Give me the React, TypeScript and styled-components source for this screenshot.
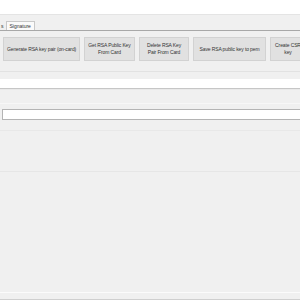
import styled, { createGlobalStyle } from 'styled-components'

const Global = createGlobalStyle`
  html, body {
    margin: 0;
    padding: 0;
    background: #f0f0f0;
    overflow: hidden;
  }
  #root {
    width: 300px;
    height: 300px;
  }
`

const Window = styled.div`
  width: 300px;
  height: 300px;
  display: flex;
  flex-direction: column;
  background: #f0f0f0;
  font-family: 'Liberation Sans', Arial, sans-serif;
  font-size: 5px;
  color: #333;
  overflow: hidden;
`

const TopArea = styled.div`
  height: 14px;
  background: #ffffff;
  border-bottom: 1px solid #e4e4e4;
`

const TabStrip = styled.div`
  height: 15px;
  display: flex;
  align-items: flex-end;
  border-bottom: 1px solid #a8a8a8;
`

const Tab = styled.div<{ $active?: boolean }>`
  height: 8px;
  padding: 0 3px;
  display: flex;
  align-items: center;
  background: ${(p) => (p.$active ? '#fafafa' : '#f0f0f0')};
  border: 1px solid ${(p) => (p.$active ? '#c8c8c8' : 'transparent')};
  border-bottom: none;
  white-space: nowrap;
`

const ClippedTab = styled(Tab)`
  padding: 0 1px 0 0;
`

const Panel = styled.div`
  flex: 1;
  display: flex;
  flex-direction: column;
`

const ButtonRow = styled.div`
  display: flex;
  gap: 4px;
  padding: 6px 0 0 3px;
  height: 24px;
`

const Action = styled.button<{ $w: number; $single?: boolean }>`
  flex: 0 0 ${(p) => p.$w}px;
  height: 24px;
  margin: 0;
  padding: 0 3px;
  background: #e1e1e1;
  border: 1px solid #d2d2d2;
  font-family: inherit;
  font-size: 5px;
  letter-spacing: -0.12px;
  line-height: 7px;
  color: #333;
  text-align: center;
  white-space: ${(p) => (p.$single ? 'nowrap' : 'normal')};
  overflow: hidden;
`

const Divider = styled.div`
  height: 1px;
  margin-top: 10px;
  background: #e2e2e2;
`

const WhiteBand = styled.div`
  height: 9px;
  margin-top: 7px;
  background: #ffffff;
  border-bottom: 1px solid #c6c6c6;
`

const Stripes = styled.div`
  height: 14px;
  border-bottom: 1px solid #f7f7f7;
  box-shadow: inset 0 5px 0 -4px #e9e9e9;
`

const Field = styled.div`
  margin: 5px 0 0 2px;
  height: 9px;
  background: #ffffff;
  border: 1px solid #b4b4b4;
  border-right: none;
`

const Lines = styled.div`
  height: 10px;
  border-bottom: 1px solid #e8e8e8;
`

const FillGap = styled.div`
  height: 40px;
  border-bottom: 1px solid #e6e6e6;
`

const Bottom = styled.div`
  flex: 1;
  display: flex;
  flex-direction: column;
  justify-content: flex-end;
`

const Footer = styled.div`
  height: 6px;
  border-top: 1px solid #fbfbfb;
  border-bottom: 1px solid #cfcfcf;
`

export default function App() {
  return (
    <Window>
      <Global />
      <TopArea />
      <TabStrip>
        <ClippedTab>s</ClippedTab>
        <Tab $active>Signature</Tab>
      </TabStrip>
      <Panel>
        <ButtonRow>
          <Action $w={77} $single>Generate RSA key pair (on-card)</Action>
          <Action $w={51}>Get RSA Public Key From Card</Action>
          <Action $w={50}>Delete RSA Key Pair From Card</Action>
          <Action $w={73} $single>Save RSA public key to pem</Action>
          <Action $w={36}>Create CSR key</Action>
        </ButtonRow>
        <Divider />
        <WhiteBand />
        <Stripes />
        <Field />
        <Lines />
        <FillGap />
        <Bottom>
          <Footer />
        </Bottom>
      </Panel>
    </Window>
  )
}
